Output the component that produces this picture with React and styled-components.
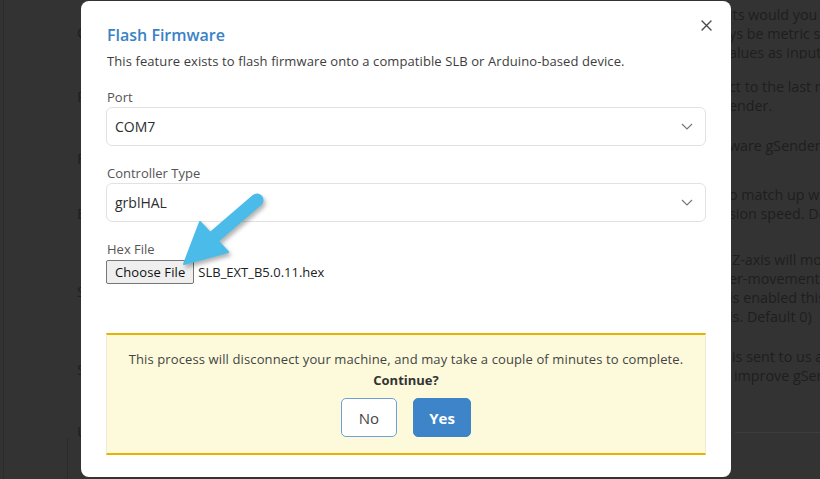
import React from 'react';
import styled, { createGlobalStyle } from 'styled-components';

const FONT = `"Open Sans", "Noto Sans", Arial, sans-serif`;

const Global = createGlobalStyle`
  html, body { margin: 0; padding: 0; background: #333333; overflow: hidden; }
  #root { width: 820px; height: 479px; }
  * { box-sizing: border-box; }
`;

/* ---------- background settings page (dimmed) ---------- */
const Page = styled.div`
  position: relative;
  width: 820px;
  height: 479px;
  overflow: hidden;
  background: #333333;
  font-family: ${FONT};
  display: flex;
`;

const Rail = styled.div`
  width: 68px;
  margin-left: 3px;
  border-left: 1px solid #2c2c2c;
  flex: none;
`;

const Settings = styled.div`
  flex: 1;
  display: flex;
  flex-direction: column;
  padding-top: 5px;
  min-width: 0;
`;

const SettingRow = styled.div`
  display: grid;
  grid-template-columns: 658px 1fr;
  margin-top: ${(p) => p.$gap || 0}px;
  height: ${(p) => p.$h}px;
`;

const SettingLabel = styled.div`
  padding-left: 6px;
  padding-top: ${(p) => p.$offset || 0}px;
  font-size: 15px;
  line-height: 19px;
  color: #1e1e1e;
  white-space: nowrap;
  overflow: hidden;
`;

const SettingDesc = styled.div`
  font-size: 14.3px;
  line-height: 19px;
  color: #1e1e1e;
  white-space: nowrap;
  overflow: hidden;
`;

const DescLine = styled.div`
  padding-left: ${(p) => p.$indent || 0}px;
`;

const FooterCard = styled.div`
  margin-top: 33px;
  flex: 1;
  display: grid;
  grid-template-columns: 658px 1fr;
`;

const FooterLabel = styled.div`
  margin-left: -4px;
  padding-left: 10px;
  font-size: 15px;
  line-height: 19px;
  color: #1e1e1e;
  background: linear-gradient(#2a2a2a, #2a2a2a) no-repeat 0 16px / 1px 100%;
`;

const FooterRule = styled.div`
  border-top: 1px solid #3d3d3d;
  margin: 10px 0 0 6px;
`;

/* ---------- modal ---------- */
const Modal = styled.div`
  position: absolute;
  left: 81px;
  top: 1px;
  width: 650px;
  height: 476px;
  background: #ffffff;
  border-radius: 8px;
  padding: 22px 25px 0 25px;
  font-family: ${FONT};
  color: #3b3b3b;
`;

const CloseButton = styled.button`
  position: absolute;
  top: 15px;
  right: 16px;
  width: 18px;
  height: 18px;
  padding: 0;
  border: none;
  background: transparent;
  display: flex;
  align-items: center;
  justify-content: center;
  cursor: pointer;
`;

const Title = styled.h2`
  margin: 0 0 0 1px;
  font-size: 16px;
  line-height: 24px;
  font-weight: 600;
  color: #3a82c6;
`;

const Subtitle = styled.p`
  margin: 4px 0 0 1px;
  font-size: 13px;
  letter-spacing: 0.09px;
  line-height: 20px;
  color: #3d3d3d;
`;

const Field = styled.div`
  margin-top: ${(p) => p.$gap}px;
  display: flex;
  flex-direction: column;
  align-items: flex-start;
`;

const Label = styled.label`
  margin-left: 1px;
  font-size: 13px;
  line-height: 20px;
  color: #555555;
`;

const Select = styled.div`
  width: 100%;
  height: 39px;
  border: 1px solid #e2e2e2;
  border-radius: 6px;
  display: flex;
  align-items: center;
  justify-content: space-between;
  padding: 0 12px 0 8px;
  font-size: 14px;
  color: #2e2e2e;
`;

const FileRow = styled.div`
  margin-top: 1px;
  display: flex;
  align-items: center;
  gap: 4px;
`;

const FileButton = styled.button`
  height: 24px;
  padding: 0 8px;
  background: #efefef;
  border: 1px solid #767676;
  border-radius: 2px;
  font-family: ${FONT};
  font-size: 13px;
  letter-spacing: 0.1px;
  color: #111;
`;

const FileName = styled.span`
  font-size: 13px;
  color: #222;
`;

const Warning = styled.div`
  margin-top: 49px;
  background: #fdfadc;
  border-top: 2px solid #e6b400;
  border-bottom: 2px solid #e6b400;
  border-left: 1px solid #f1ecd0;
  border-right: 1px solid #f1ecd0;
  padding: 14px 0 16px;
  display: flex;
  flex-direction: column;
  align-items: center;
  text-align: center;
`;

const WarningText = styled.p`
  margin: 0;
  font-size: 13px;
  letter-spacing: 0.12px;
  line-height: 20px;
  color: #444;
`;

const Strong = styled.p`
  margin: 1px 0 0;
  font-size: 13px;
  line-height: 20px;
  font-weight: 700;
  color: #333;
`;

const Actions = styled.div`
  margin-top: 8px;
  display: flex;
  gap: 16px;
`;

const ActionButton = styled.button`
  height: 39px;
  min-width: ${(p) => (p.$primary ? 58 : 56)}px;
  border-radius: 5px;
  font-family: ${FONT};
  font-size: 15px;
  font-weight: ${(p) => (p.$primary ? 700 : 500)};
  color: ${(p) => (p.$primary ? '#ffffff' : '#444')};
  background: ${(p) => (p.$primary ? '#3d84c8' : '#ffffff')};
  border: 1px solid ${(p) => (p.$primary ? '#3d84c8' : '#6e9fd6')};
`;

const Pointer = styled.svg`
  position: absolute;
  left: 170px;
  top: 185px;
  width: 100px;
  height: 95px;
  overflow: visible;
  filter: drop-shadow(2px 3px 2px rgba(0, 0, 0, 0.3));
`;

const settings = [
  { label: 'Carve', h: 54, gap: 0, off: 18, lines: [['its would you prefer gSender to use?'], ['ys be metric since grbl always'], ['alues as input.', -4]] },
  { label: 'Reconnect', h: 40, gap: 18, off: 10, lines: [['ct to the last machine you used'], ['ender.', -1]] },
  { label: 'Firmware', h: 44, gap: 19, off: 13, lines: [['ware gSender will use', -3]] },
  { label: 'Baudrate', h: 38, gap: 5, off: 19, lines: [['o match up with your controller', -2], ['sion speed. Default 115200']] },
  { label: 'Safe Height', h: 78, gap: 27, off: 32, lines: [['Z-axis will move up before', 3], ['er-movements such as'], ['is enabled this is relative'], ['is. Default 0)', -2]] },
  { label: 'Send Usage Data', h: 42, gap: 19, off: 13, lines: [['is sent to us anonymously', 3], ['improve gSender', 5]] },
];

export default function App() {
  return (
    <>
      <Global />
      <Page>
        <Rail />
        <Settings>
          {settings.map((s) => (
            <SettingRow key={s.label} $h={s.h} $gap={s.gap}>
              <SettingLabel $offset={s.off}>{s.label}</SettingLabel>
              <SettingDesc>
                {s.lines.map(([t, ind]) => (
                  <DescLine key={t} $indent={ind}>{t}</DescLine>
                ))}
              </SettingDesc>
            </SettingRow>
          ))}
          <FooterCard>
            <FooterLabel>Units</FooterLabel>
            <FooterRule />
          </FooterCard>
        </Settings>

        <Modal role="dialog">
          <CloseButton aria-label="Close">
            <svg width="11" height="11" viewBox="0 0 11 11">
              <path d="M1 1 L10 10 M10 1 L1 10" stroke="#4a4a4a" strokeWidth="1.4" strokeLinecap="round" />
            </svg>
          </CloseButton>
          <Title>Flash Firmware</Title>
          <Subtitle>This feature exists to flash firmware onto a compatible SLB or Arduino-based device.</Subtitle>

          <Field $gap={16}>
            <Label>Port</Label>
            <Select>
              <span>COM7</span>
              <svg width="12" height="7" viewBox="0 0 12 7">
                <path d="M1 1 L6 6 L11 1" fill="none" stroke="#777" strokeWidth="1.2" />
              </svg>
            </Select>
          </Field>

          <Field $gap={17}>
            <Label>Controller Type</Label>
            <Select>
              <span>grblHAL</span>
              <svg width="12" height="7" viewBox="0 0 12 7">
                <path d="M1 1 L6 6 L11 1" fill="none" stroke="#777" strokeWidth="1.2" />
              </svg>
            </Select>
          </Field>

          <Field $gap={17}>
            <Label>Hex File</Label>
            <FileRow>
              <FileButton>Choose File</FileButton>
              <FileName>SLB_EXT_B5.0.11.hex</FileName>
            </FileRow>
          </Field>

          <Warning>
            <WarningText>This process will disconnect your machine, and may take a couple of minutes to complete.</WarningText>
            <Strong>Continue?</Strong>
            <Actions>
              <ActionButton>No</ActionButton>
              <ActionButton $primary>Yes</ActionButton>
            </Actions>
          </Warning>
        </Modal>

        <Pointer viewBox="170 185 100 95">
          <line x1="257" y1="200" x2="214" y2="237" stroke="#4bbbe9" strokeWidth="13" strokeLinecap="round" />
          <polygon points="184,264 200,222 228,252" fill="#4bbbe9" strokeLinejoin="round" stroke="#4bbbe9" strokeWidth="2" />
        </Pointer>
      </Page>
    </>
  );
}
